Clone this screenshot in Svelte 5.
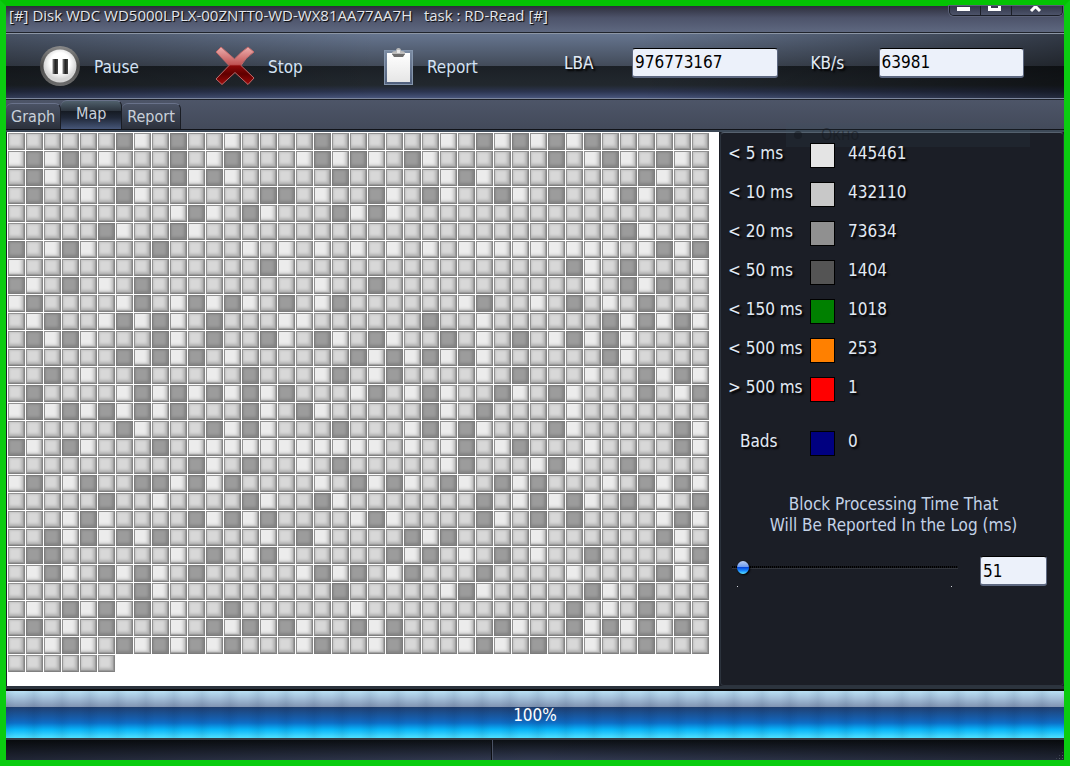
<script lang="ts">
  type Speed = "fast" | "normal" | "slow";

  type LegendRow = {
    label: string;
    color: string;
    count: number;
  }

  const cellTypes: Record<string, Speed> = {
    "o": "fast",
    ".": "normal",
    "#": "slow"
  }

  // one character per block group, read left to right
  const blockRows: string[] = [
    "......#o.#..o....#." + ".....o.#o#o#o#......",
    "o#o#.o...#.o#...o#o" + "#o.#o......#.o#o.#o.",
    ".#o......#o#o.....#" + ".....o#o........#o..",
    ".#..o.#o......##.o." + ".#o.#o..#o.#..o#o#..",
    ".........o#o.#o...#" + "o#o.................",
    ".....#o..#o........" + "...............#o...",
    "#.o#o...#....o.o.o." + "o.o.o.ooooooooo.o#o#",
    "o.............#o..." + "............#o.#...o",
    "#o.#.o.#.........o." + ".#...........o.#o#..",
    "o#....o#.o#o#o.#.o#" + "......o#..o.#.o.#...",
    ".o#..o#o#o.#...oo.." + "....#..o......#o#o#o",
    ".#o#o...#o.#..#o.#o" + ".#o..#.o.#.o#o#o....",
    "......#o#o#.o......" + "#o#o#o#o......#o....",
    "..#.o..#...o.#...o#" + ".o#....o.#...o..#o#o",
    ".#....o#o#o#o#o#..." + "o#.o#o..#o.#o...#.o#",
    "o#o#o#o#o#...#o.#o." + "....#o.#....o.......",
    "......#o...#o#o...#" + "...o#o#o...#o.....#o",
    "#o.#o...#.ooooooooo" + "oo.o.o#.o#...o....#o",
    "..........#o.#..o.#" + ".....o#...o#o..#....",
    "o#.o#..##o#o#....o." + "#o#o.#o.#o#...o.#o#o",
    ".....#..o....#o..#o" + ".......#.o#o#o.#.o.#",
    "...o#o....#o#o#...." + "o#o....#o.#.#....o#o",
    "..#o#o#o#.....o.#o." + "...#o#....o......#o.",
    ".##......o.#.o#o..." + "..#o#.o.#.o..#....o#",
    ".o#o.#o#o.#.....o#o" + "#.o#...#....o....#o.",
    ".......#o.........#" + ".....o#o.....#o.#...",
    ".o.#o#o#.o..#......" + "o...........#.o.#...",
    ".#.o.#...o.#o#o#o.." + "#o#...o.#o..#o#o#o#.",
    "..o#o.#o#o#o#...o#." + ".o#...o#o.#..o..#...",
    "......"
  ];

  const cells = blockRows.join("").split("").map((c) => cellTypes[c]);

  const legend: LegendRow[] = [
    { label: "< 5 ms", color: "#e4e4e4", count: 445461 },
    { label: "< 10 ms", color: "#c8c8c8", count: 432110 },
    { label: "< 20 ms", color: "#909090", count: 73634 },
    { label: "< 50 ms", color: "#545454", count: 1404 },
    { label: "< 150 ms", color: "#008000", count: 1018 },
    { label: "< 500 ms", color: "#ff8000", count: 253 },
    { label: "> 500 ms", color: "#ff0000", count: 1 },
    { label: "Bads", color: "#000080", count: 0 }
  ];

  const tabs = ["Graph", "Map", "Report"];

  let activeTab = $state("Map");
  let lba = $state("976773167");
  let speed = $state("63981");
  let threshold = $state(51);
  let progress = $state(100);
</script>

<div class="window">
  <header class="titlebar">
    <h1>[#] Disk WDC WD5000LPLX-00ZNTT0-WD-WX81AA77AA7H &nbsp; task : RD-Read [#]</h1>
    <div class="controls">
      <button aria-label="Minimize">
        <svg width="13" height="9" viewBox="0 0 13 9"><path d="M0 1h13v4H0z" fill="#fff" /></svg>
      </button>
      <button aria-label="Maximize">
        <svg width="13" height="9" viewBox="0 0 13 9"><path d="M1.500 -3h10v6.500h-10z" fill="none" stroke="#fff" stroke-width="3" /></svg>
      </button>
      <button class="close" aria-label="Close">
        <svg width="13" height="9" viewBox="0 0 13 9"><path d="M2 -4l9 9M11 -4l-9 9" stroke="#fff" stroke-width="3" /></svg>
      </button>
    </div>
  </header>

  <div class="toolbar">
    <button class="tool pause">
      <svg width="40" height="40" viewBox="0 0 40 40">
        <defs>
          <linearGradient id="ring" x2="0" y2="1">
            <stop offset="0" stop-color="#8a8a8a" />
            <stop offset="0.5" stop-color="#4a4a4a" />
            <stop offset="1" stop-color="#6e6e6e" />
          </linearGradient>
          <radialGradient id="disc" cy="0.4">
            <stop offset="0.6" stop-color="#fff" />
            <stop offset="1" stop-color="#d4d4d4" />
          </radialGradient>
          <linearGradient id="bar">
            <stop offset="0" stop-color="#888" />
            <stop offset="0.5" stop-color="#222" />
            <stop offset="1" stop-color="#444" />
          </linearGradient>
        </defs>
        <circle cx="20" cy="20" r="20" fill="url(#ring)" />
        <circle cx="20" cy="20" r="16.5" fill="url(#disc)" />
        <rect x="12.5" y="13" width="5.5" height="15" fill="url(#bar)" />
        <rect x="22.5" y="13" width="5.5" height="15" fill="url(#bar)" />
      </svg>
      <span>Pause</span>
    </button>
    <button class="tool stop">
      <svg width="40" height="40" viewBox="0 0 40 40">
        <defs>
          <linearGradient id="cross" gradientUnits="userSpaceOnUse" x1="0" y1="0" x2="0" y2="40">
            <stop offset="0" stop-color="#f0b4b4" />
            <stop offset="0.46" stop-color="#c25454" />
            <stop offset="0.5" stop-color="#8c0808" />
            <stop offset="0.7" stop-color="#600000" />
            <stop offset="1" stop-color="#a80c0c" />
          </linearGradient>
        </defs>
        <path
          d="M6 1L19.500 13Q26 6 33 1L39 6Q30 12 26 19.500L39 32L33 38.500L20 26.500L7 38.500L1 33L14 19.500L1 6Z"
          fill="url(#cross)"
          stroke="#c06a6a"
          stroke-width="1"
        />
      </svg>
      <span>Stop</span>
    </button>
    <button class="tool report">
      <svg width="30" height="40" viewBox="0 0 30 40">
        <defs>
          <linearGradient id="board" x2="0" y2="1">
            <stop offset="0" stop-color="#7b8ba2" />
            <stop offset="1" stop-color="#51607c" />
          </linearGradient>
          <linearGradient id="paper" x2="0" y2="1">
            <stop offset="0" stop-color="#fff" />
            <stop offset="1" stop-color="#e6e6e6" />
          </linearGradient>
        </defs>
        <rect x="0.5" y="4.5" width="28" height="34" fill="url(#board)" stroke="#8596ad" />
        <path d="M3 7h23v29H3z" fill="url(#paper)" />
        <path d="M8 9V7q0-2 4-2q0-3 2.500-3q2.500 0 2.500 3q4 0 4 2v2z" fill="#bcbcbc" />
        <path d="M8 8h13l-2 3h-9z" fill="#6c6c6c" />
        <path d="M13 4h3v3h-3z" fill="#e8e8e8" />
      </svg>
      <span>Report</span>
    </button>
    <div class="fields">
      <label for="lba">LBA</label>
      <input id="lba" type="text" bind:value={lba} />
      <label class="rate" for="speed">KB/s</label>
      <input id="speed" type="text" bind:value={speed} />
    </div>
  </div>

  <nav class="tabs">
    {#each tabs as tab}
      <button class:active={activeTab === tab} onclick={() => (activeTab = tab)}>{tab}</button>
    {/each}
  </nav>

  <main>
    <section class="map">
      {#each cells as cell}
        <i class="cell {cell}"></i>
      {/each}
    </section>

    <aside>
      <div class="ghost"><span class="dot"></span>Окно</div>
      <ul class="legend">
        {#each legend as row}
          <li class:bads={row.label === "Bads"}>
            <span class="name">{row.label}</span>
            <span class="swatch" style:background-color={row.color}></span>
            <span>{row.count}</span>
          </li>
        {/each}
      </ul>

      <label class="caption" for="threshold">
        Block Processing Time That<br />Will Be Reported In the Log (ms)
      </label>
      <div class="threshold">
        <div class="slider">
          <input id="threshold" type="range" min="0" max="2000" bind:value={threshold} />
          <div class="ticks"><i></i><i></i></div>
        </div>
        <input class="value" type="text" aria-label="Milliseconds" bind:value={threshold} />
      </div>
    </aside>
  </main>

  <div class="progress" role="progressbar" aria-valuenow={progress} aria-label="Scan progress">
    <div class="fill" style:width="{progress}%"></div>
    <span>{progress}%</span>
  </div>

  <footer>
    <div class="pane"></div>
    <div class="grip"></div>
  </footer>
</div>

<style>
  :global(body) {
    margin: 0;
    background: #1b1e26;
  }

  .window {
    display: flex;
    flex-direction: column;
    box-sizing: border-box;
    min-height: 100vh;
    border: 6px solid #0bcc10;
    border-top-color: #04c304;
    background: #1b1e26;
    color: #e2eaf4;
    font-family: "DejaVu Sans Condensed", Tahoma, "DejaVu Sans", sans-serif;
    font-size: 17px;
    line-height: 20px;
  }

  button {
    padding: 0;
    border: 0;
    background: none;
    color: inherit;
    font: inherit;
  }

  .titlebar {
    display: flex;
    justify-content: space-between;
    align-items: flex-start;
    height: 26px;
    border-bottom: 1px solid #20242c;
    background: linear-gradient(#2d2e3c, #4d536a 45%, #5e6880);
  }

  h1 {
    margin: 0;
    padding-left: 3px;
    font-family: "Open Sans", "Noto Sans", sans-serif;
    font-size: 15px;
    font-weight: 400;
    line-height: 18px;
    color: #e4e6ea;
    text-shadow: 1px 1px 1px #000;
  }

  .controls {
    display: flex;
    margin-right: 1px;
    border: 1px solid #1b1e27;
    border-top: 0;
    border-radius: 0 0 5px 5px;
    box-shadow: 0 0 0 1px #5a6178;
    overflow: hidden;
  }

  .controls button {
    width: 31px;
    height: 9px;
    padding-right: 4px;
    border-right: 1px solid #1b1e27;
    background: linear-gradient(#33374a, #4c5369);
  }

  .controls svg {
    display: block;
    margin: 0 auto;
  }

  .controls .close {
    width: 50px;
    border-right: 0;
  }

  .toolbar {
    display: flex;
    align-items: center;
    height: 64px;
    padding: 0 40px 0 34px;
    border-top: 1px solid #8c96a5;
    border-bottom: 1px solid #7c869c;
    background:
      linear-gradient(90deg, rgba(0, 0, 0, 0.3), rgba(0, 0, 0, 0) 35%, rgba(0, 0, 0, 0) 60%, rgba(0, 0, 0, 0.5)),
      linear-gradient(#66758f, #424b59 50%, #1b2026 50%, #22282e 80%, #2c3550 90%, #48557c);
  }

  .tool {
    display: flex;
    align-items: center;
    gap: 14px;
    flex: none;
    color: #d3e2f4;
  }

  .tool span {
    padding-top: 2px;
  }

  .pause {
    width: 175px;
  }

  .stop {
    width: 169px;
    gap: 13px;
  }

  .report {
    width: 180px;
    gap: 13px;
  }

  .fields {
    display: flex;
    align-items: center;
    flex: 1;
    min-width: 0;
    padding-bottom: 7px;
  }

  .fields label {
    flex: none;
    width: 68px;
    text-shadow: 2px 2px 2px #000;
  }

  .fields .rate {
    margin-left: 33px;
  }

  input[type="text"] {
    box-sizing: border-box;
    min-width: 0;
    height: 30px;
    padding: 0 2px;
    border: 1px solid #5d6880;
    border-top-color: #000;
    border-bottom: 2px solid #5d6880;
    border-radius: 3px;
    background: #ecf1fa;
    color: #000;
    font: inherit;
  }

  .fields input {
    flex: 1;
  }

  .tabs {
    display: flex;
    align-items: flex-end;
    height: 29px;
    border-top: 1px solid #1c2028;
    border-bottom: 1px solid #111319;
    background: linear-gradient(#4d5568, #434a5a);
    font-size: 16px;
  }

  .tabs button {
    height: 26px;
    padding: 0 5px;
    border-right: 1px solid #1a1d24;
    border-top: 1px solid #69728a;
    border-radius: 6px 6px 0 0;
    background: linear-gradient(#4a5264, #2c313c);
    color: #c9d0da;
  }

  .tabs button.active {
    width: 61px;
    height: 29px;
    padding-bottom: 3px;
    background: linear-gradient(#50606c, #2c343e 35%, #151a22 35%, #202838 60%, #465678);
  }

  main {
    display: flex;
    flex: 1;
    padding-left: 1px;
    border-top: 2px solid #3d4957;
    border-bottom: 3px solid #2c343e;
  }

  .map {
    display: grid;
    grid-template-columns: repeat(auto-fill, 17px);
    align-content: start;
    gap: 1px;
    flex: 1;
    padding: 1px;
    background: #fff;
  }

  .cell {
    box-sizing: border-box;
    height: 17px;
    border: 1px solid #929292;
    border-right-color: #848484;
    border-bottom-color: #808080;
    box-shadow: inset -1px -1px 1px #969696, inset -3px -3px 3px #b4b4b4, inset 1px 1px 2px #c4c4c4;
    background: #d8d8d8;
  }

  .cell.fast {
    box-shadow: inset -1px -1px 1px #a0a0a0, inset -3px -2px 3px #c4c4c4;
    background: #ececec;
  }

  .cell.slow {
    border-color: #7c7c7c;
    box-shadow: inset -2px -2px 3px #828282, inset 1px 1px 2px #8c8c8c;
    background: #9c9c9c;
  }

  aside {
    position: relative;
    box-sizing: border-box;
    width: 344px;
    margin-left: 1px;
    padding: 10px 16px 0 7px;
    border: 1px solid #2c333d;
    border-top-color: #56616e;
    border-radius: 4px;
    background: #1b1e26;
  }

  .ghost {
    position: absolute;
    top: -10px;
    right: 33px;
    display: flex;
    align-items: center;
    gap: 19px;
    box-sizing: border-box;
    width: 244px;
    height: 24px;
    padding-left: 8px;
    background: rgba(64, 90, 110, 0.12);
    color: rgba(20, 23, 29, 0.5);
    font-size: 16px;
  }

  .dot {
    width: 8px;
    height: 8px;
    border-radius: 50%;
    background: rgba(20, 23, 29, 0.5);
  }

  .legend {
    position: relative;
    margin: 0;
    padding: 0;
    list-style: none;
    text-shadow: 2px 2px 2px #000;
  }

  .legend li {
    display: flex;
    height: 39px;
    margin-bottom: 0;
    white-space: nowrap;
  }

  .legend .bads {
    margin-top: 15px;
  }

  .name {
    width: 82px;
  }

  .bads .name {
    box-sizing: border-box;
    padding-left: 12px;
  }

  .swatch {
    box-sizing: border-box;
    width: 25px;
    height: 25px;
    margin-right: 13px;
    border: 1px solid #000;
  }

  .caption {
    display: block;
    margin: 24px 0 20px;
    padding-left: 12px;
    color: #c3d2e6;
    line-height: 21px;
    text-align: center;
  }

  .threshold {
    display: flex;
    justify-content: space-between;
    padding-left: 4px;
  }

  .slider {
    width: 226px;
  }

  input[type="range"] {
    display: block;
    appearance: none;
    width: 100%;
    height: 22px;
    margin: 0;
    background: none;
  }

  input[type="range"]::-webkit-slider-runnable-track {
    height: 3px;
    border-bottom: 1px solid #33363d;
    background: repeating-linear-gradient(90deg, #000 0 1px, #15171c 1px 2px);
  }

  input[type="range"]::-webkit-slider-thumb {
    appearance: none;
    width: 12px;
    height: 13px;
    margin-top: -5px;
    border-radius: 50%;
    box-shadow: 1px 1px 2px #000;
    background: linear-gradient(#b9cdf4, #6d9bf0 45%, #0648dc 50%, #1a8cff 75%, #5fe6ff);
  }

  .ticks {
    display: flex;
    justify-content: space-between;
    padding: 8px 6px 0 5px;
  }

  .ticks i {
    width: 1px;
    height: 1px;
    background: #d0d4da;
  }

  .threshold .value {
    width: 67px;
  }

  .progress {
    position: relative;
    height: 47px;
    border-top: 2px solid #0a0a0c;
    border-bottom: 2px solid #333c46;
    text-align: center;
    line-height: 49px;
  }

  .progress span {
    position: relative;
    color: #fff;
  }

  .fill {
    position: absolute;
    top: 0;
    bottom: 0;
    left: 0;
    background:
      repeating-linear-gradient(90deg, rgba(0, 20, 60, 0.08) 0, rgba(0, 20, 60, 0) 9px, rgba(0, 20, 60, 0) 18px, rgba(0, 20, 60, 0.08) 28px),
      linear-gradient(#b9e0f4, #a4c0da 15%, #8296b4 33%, #213e6e 33%, #1560b0 60%, #0c70c8 68%, #08b4f8 82%, #50e0ff);
  }

  footer {
    display: flex;
    justify-content: space-between;
    height: 20px;
    background: linear-gradient(90deg, rgba(0, 0, 0, 0.35), rgba(0, 0, 0, 0) 50%, rgba(0, 0, 0, 0.35)),
      linear-gradient(#0c1014, #323a52);
  }

  .pane {
    width: 46%;
    border-right: 1px solid #4a5264;
    box-shadow: inset -1px 0 #0c0e12;
    box-sizing: border-box;
  }

  .grip {
    align-self: flex-end;
    width: 9px;
    height: 9px;
    background: radial-gradient(#555c68 1px, transparent 1px) 0 0 / 3px 3px;
    clip-path: polygon(100% 0, 100% 100%, 0 100%);
  }
</style>
